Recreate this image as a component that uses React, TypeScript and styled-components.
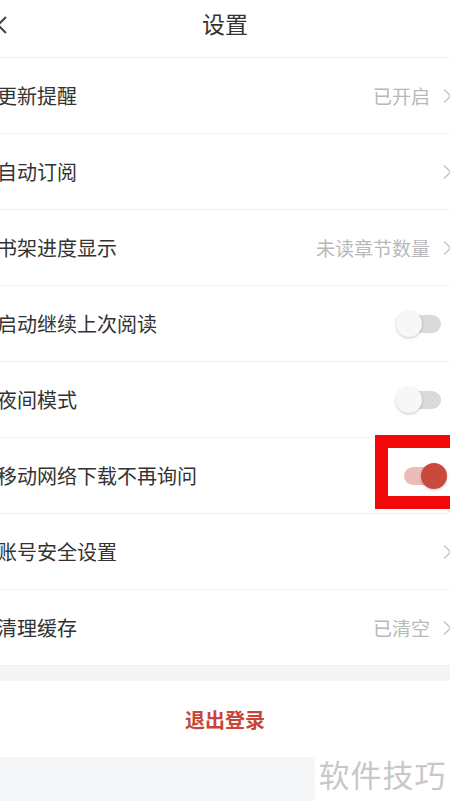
import React from "react";
import styled, { createGlobalStyle } from "styled-components";

const GlobalStyle = createGlobalStyle`
  html, body {
    margin: 0;
    padding: 0;
    background: #ffffff;
    overflow: hidden;
  }
  body {
    font-family: "Noto Sans CJK SC", "Noto Sans", sans-serif;
  }
`;

const Page = styled.div`
  width: 456px;
  height: 801px;
  display: flex;
  flex-direction: column;
  background: #f5f6f8;
  position: relative;
`;

const Header = styled.div`
  height: 58px;
  box-sizing: border-box;
  padding-bottom: 12px;
  display: flex;
  align-items: center;
  justify-content: center;
  position: relative;
  background: #ffffff;
  border-bottom: 1px solid #f1f1f1;
`;

const BackButton = styled.svg`
  position: absolute;
  left: -6px;
  top: 15px;
`;

const Title = styled.div`
  font-size: 23px;
  color: #333333;
  margin-right: 6px;
`;

const List = styled.div`
  background: #ffffff;
`;

const Row = styled.div`
  height: 75px;
  display: flex;
  align-items: center;
  border-bottom: 1px solid #f1f1f1;
`;

const Label = styled.div`
  flex: 1;
  margin-left: -3px;
  font-size: 20px;
  color: #333333;
`;

const Value = styled.span`
  font-size: 19px;
  color: #b8b8b8;
  margin-right: 13px;
`;

const Chevron = styled.svg`
  margin-right: 4px;
`;

const ToggleWrap = styled.div`
  position: relative;
  width: 54px;
  height: 26px;
  margin-right: 8px;
`;

const Track = styled.div<{ $on: boolean }>`
  position: absolute;
  top: 4px;
  left: ${(p) => (p.$on ? "10px" : "7px")};
  width: 40px;
  height: 18px;
  border-radius: 9px;
  background: ${(p) => (p.$on ? "#ebbdb6" : "#dadada")};
`;

const Knob = styled.div<{ $on: boolean }>`
  position: absolute;
  top: 0;
  left: ${(p) => (p.$on ? "27px" : "2px")};
  width: 26px;
  height: 26px;
  border-radius: 50%;
  background: ${(p) => (p.$on ? "#c94a3d" : "#f7f7f7")};
  box-shadow: 0 1px 3px rgba(0, 0, 0, 0.22);
`;

const Highlight = styled.div`
  position: absolute;
  left: -19px;
  top: -28px;
  width: 80px;
  height: 48px;
  border: 13px solid #f20a0a;
`;

const Gap = styled.div`
  height: 15px;
  background: #f5f5f5;
`;

const Logout = styled.div`
  height: 76px;
  display: flex;
  align-items: center;
  justify-content: center;
  background: #ffffff;
  font-size: 20px;
  font-weight: 700;
  color: #c8453b;
  padding-right: 6px;
`;

const Watermark = styled.div`
  position: absolute;
  right: 6px;
  bottom: 0;
  width: 135px;
  height: 56px;
  background: #ffffff;
  display: flex;
  align-items: center;
  justify-content: center;
  font-size: 31px;
  color: #c8c8c8;
  letter-spacing: 1px;
`;

interface SettingRow {
  label: string;
  value?: string;
  toggle?: boolean;
  on?: boolean;
  marked?: boolean;
}

const rows: SettingRow[] = [
  { label: "更新提醒", value: "已开启" },
  { label: "自动订阅" },
  { label: "书架进度显示", value: "未读章节数量" },
  { label: "启动继续上次阅读", toggle: true, on: false },
  { label: "夜间模式", toggle: true, on: false },
  { label: "移动网络下载不再询问", toggle: true, on: true, marked: true },
  { label: "账号安全设置" },
  { label: "清理缓存", value: "已清空" },
];

const Toggle: React.FC<{ on: boolean; marked?: boolean }> = ({ on, marked }) => (
  <ToggleWrap>
    <Track $on={on} />
    <Knob $on={on} />
    {marked && <Highlight />}
  </ToggleWrap>
);

const ArrowRight = () => (
  <Chevron width="9" height="16" viewBox="0 0 9 16">
    <polyline
      points="1,1.5 7.5,8 1,14.5"
      fill="none"
      stroke="#c4c4c4"
      strokeWidth="1.3"
    />
  </Chevron>
);

export default function App() {
  return (
    <>
      <GlobalStyle />
      <Page>
        <Header>
          <BackButton width="14" height="20" viewBox="0 0 14 20">
            <polyline
              points="12,2 4,10 12,18"
              fill="none"
              stroke="#444444"
              strokeWidth="2"
            />
          </BackButton>
          <Title>设置</Title>
        </Header>
        <List>
          {rows.map((row) => (
            <Row key={row.label}>
              <Label>{row.label}</Label>
              {row.toggle ? (
                <Toggle on={!!row.on} marked={row.marked} />
              ) : (
                <>
                  {row.value && <Value>{row.value}</Value>}
                  <ArrowRight />
                </>
              )}
            </Row>
          ))}
        </List>
        <Gap />
        <Logout>退出登录</Logout>
        <Watermark>软件技巧</Watermark>
      </Page>
    </>
  );
}
